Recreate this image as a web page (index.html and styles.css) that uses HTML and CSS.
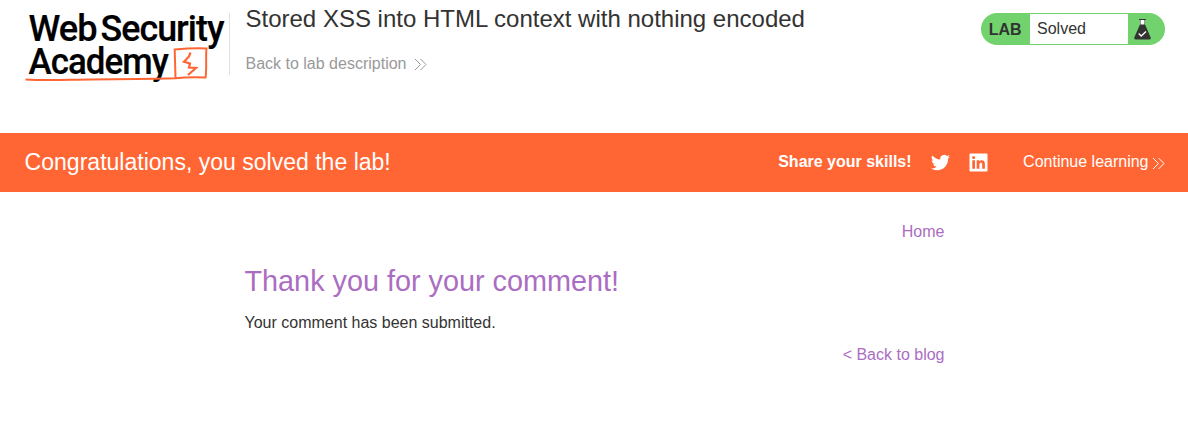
FILE: index.html
```html
<!DOCTYPE html>
<html lang="en">
<head>
<meta charset="utf-8">
<title>Stored XSS into HTML context with nothing encoded</title>
<link rel="stylesheet" href="styles.css">
</head>
<body>
<header class="lab-header">
  <svg class="logo" width="205" height="86" viewBox="24 0 205 86" role="img" aria-label="Web Security Academy">
    <g class="logo-text">
      <text x="28.500" y="41.300" textLength="68" lengthAdjust="spacingAndGlyphs">Web</text>
      <text x="100.500" y="41.300" textLength="123" lengthAdjust="spacingAndGlyphs">Security</text>
      <text x="28.500" y="74" textLength="139.500" lengthAdjust="spacingAndGlyphs">Academy</text>
    </g>
    <path class="logo-line" d="M25.500 79.500C45 80.600 65 79.800 90 79.600S140 79.200 175.500 78.300L174.700 49.500C185 48.600 195 48 206.500 48.500C205.500 58 207 68 205.500 77.500C195 77 186 77 175.500 78.300"/>
    <path class="logo-bolt" d="M190.500 52.500L189 56.500L184 61.800L190 63.500L189 67.500L196 68L188 75"/>
  </svg>
  <div class="title">
    <h2>Stored XSS into HTML context with nothing encoded</h2>
    <a class="back">Back to lab description
      <svg width="13" height="13" viewBox="0 0 13 13"><path d="M1 1L6.500 6.500L1 12M6.500 1L12 6.500L6.500 12"/></svg>
    </a>
  </div>
  <div class="status">
    <span class="lab">LAB</span>
    <span class="solved">Solved</span>
    <svg class="flask" width="17" height="21" viewBox="0 0 17 21">
      <path fill="#333332" d="M5 0h7v1h-1v4.500l5.700 13q.5 2-1.700 2H2q-2.200 0-1.700-2L6 5.500V1H5z"/>
      <path fill="#fff" d="M6.500 1h4v4.500h-4z"/>
      <path fill="none" stroke="#fff" stroke-width="1.300" d="M4.700 14.500l2.500 2.500l4.800-4.500"/>
    </svg>
  </div>
</header>
<section class="banner">
  <h4>Congratulations, you solved the lab!</h4>
  <div class="share">
    <b>Share your skills!</b>
    <svg class="twitter" width="19" height="19" viewBox="0 0 24 24"><path d="M23.950 4.570a10 10 0 0 1-2.820.770 4.960 4.960 0 0 0 2.160-2.720c-.95.550-2 .950-3.130 1.180a4.920 4.920 0 0 0-8.380 4.480C7.690 8.090 4.070 6.130 1.640 3.160a4.930 4.930 0 0 0 1.520 6.570 4.900 4.900 0 0 1-2.230-.61v.06a4.920 4.920 0 0 0 3.950 4.830 5 5 0 0 1-2.210.080 4.940 4.940 0 0 0 4.600 3.420A9.870 9.870 0 0 1 0 19.540a14 14 0 0 0 7.550 2.210c9.050 0 14-7.500 14-13.990 0-.21 0-.42-.02-.63a9.940 9.940 0 0 0 2.420-2.560z"/></svg>
    <svg class="linkedin" width="19" height="19" viewBox="0 0 19 19"><path fill-rule="evenodd" d="M1.500.5h16q1 0 1 1v16q0 1-1 1h-16q-1 0-1-1v-16q0-1 1-1zM3.300 7.200v8.600H6V7.200zM4.650 3a1.550 1.550 0 1 0 0 3.100a1.550 1.550 0 1 0 0-3.100zM7.700 7.200v8.600h2.700v-4.300c0-2.500 2.800-2.400 2.800 0v4.300h2.700v-5c0-4.200-4-4.500-5.500-2.300V7.200z"/></svg>
    <a class="continue">Continue learning<svg width="13" height="13" viewBox="0 0 13 13"><path d="M1 1L6.500 6.500L1 12M6.500 1L12 6.500L6.500 12"/></svg></a>
  </div>
</section>
<main class="content">
  <nav><a>Home</a></nav>
  <h1>Thank you for your comment!</h1>
  <p>Your comment has been submitted.</p>
  <div class="blog-link"><a>&lt; Back to blog</a></div>
</main>
</body>
</html>
```
FILE: styles.css
```css
* { box-sizing: border-box; }
body { margin: 0; background: #fff; color: #333332; font: 16px/20px "Liberation Sans", Arial, sans-serif; }
h1, h2, h4, p { margin: 0; font-weight: 400; }
svg { display: block; flex: none; }
.lab-header { display: flex; height: 133px; padding: 0 23px 0 24px; }
.logo { overflow: visible; }
.logo-text { font: 500 37px Roboto, sans-serif; letter-spacing: -1px; fill: #000; stroke: #000; stroke-width: .2px; }
.logo-line, .logo-bolt { fill: none; stroke: #ff6633; stroke-width: 2; }
.logo-bolt { stroke-width: 2.200px; }
.title { flex: 1; height: 62px; margin-top: 13px; padding-left: 15.500px; border-left: 1px solid #e0e0e0; }
.title h2 { margin-top: -9px; font-size: 24px; line-height: 30px; }
.back { display: flex; align-items: center; gap: 8px; margin-top: 20px; color: #999; }
.back path, .continue path { fill: none; stroke: currentColor; stroke-width: 1; }
.status { display: flex; width: 184px; height: 32px; margin-top: 13px; padding: 1px 0; border-radius: 16px; background: #72d26e; line-height: 30px; }
.lab { width: 49px; padding: 1px 0 0 7.700px; font-weight: 700; }
.solved { width: 98px; padding-left: 7px; background: #fff; }
.flask { margin: 5px 0 0 5.500px; }
.banner { display: flex; justify-content: space-between; height: 59px; padding: 0 23px 0 24.600px; background: #ff6633; color: #fff; }
.banner h4 { font-size: 23.040px; line-height: 58px; }
.share { display: flex; align-items: center; height: 58px; }
.share > svg { fill: #fff; }
.twitter { margin: 1px 0 0 19.500px; }
.linkedin { margin-left: 19px; }
.continue { display: flex; align-items: center; gap: 3.500px; margin-left: 35px; }
.continue svg { margin-top: 2px; }
.content { width: 700px; margin-left: 244.500px; padding-top: 30px; }
.content a, .content h1 { color: #ab6dc2; }
.content nav, .blog-link { text-align: right; }
.content h1 { margin-top: 21px; font-size: 28.800px; line-height: 36px; }
.content p { margin-top: 14px; }
.blog-link { margin-top: 12px; }
```
